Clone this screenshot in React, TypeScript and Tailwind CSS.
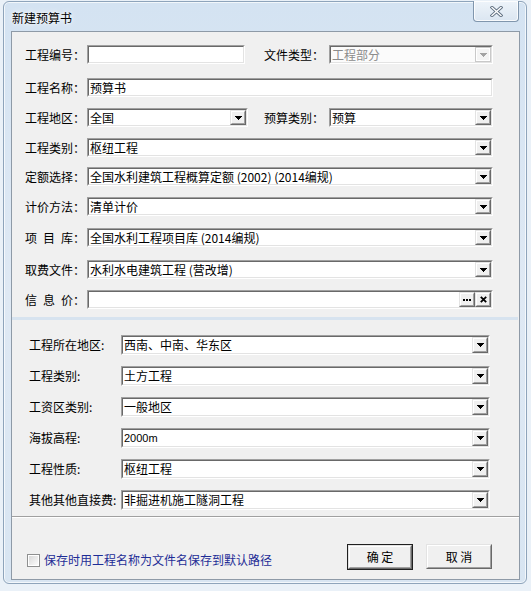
import type { ReactNode } from 'react';

const sunkenOuter =
  'border border-t-[#a0a0a0] border-l-[#a0a0a0] border-r-white border-b-white';
const sunkenInner =
  'border border-t-[#696969] border-l-[#696969] border-r-[#e3e3e3] border-b-[#e3e3e3]';
const raisedOuter =
  'border border-t-[#e3e3e3] border-l-[#e3e3e3] border-r-[#696969] border-b-[#696969]';
const raisedInner =
  'border border-t-white border-l-white border-r-[#a0a0a0] border-b-[#a0a0a0] bg-[#f0f0f0]';

function Tri({ color = '#000' }: { color?: string }) {
  return (
    <svg width="7" height="4" viewBox="0 0 7 4" shapeRendering="crispEdges">
      <rect x="0" y="0" width="7" height="1" fill={color} />
      <rect x="1" y="1" width="5" height="1" fill={color} />
      <rect x="2" y="2" width="3" height="1" fill={color} />
      <rect x="3" y="3" width="1" height="1" fill={color} />
    </svg>
  );
}

function SmallBtn({ children }: { children: ReactNode }) {
  return (
    <div className={`w-[16px] h-full flex ${raisedOuter}`}>
      <div className={`flex-1 flex items-center justify-center ${raisedInner}`}>{children}</div>
    </div>
  );
}

function DisabledBtn() {
  return (
    <div className="w-[16px] h-full flex border border-[#c9c9c9] bg-[#f4f4f4]">
      <div className="flex-1 flex items-center justify-center border border-white">
        <Tri color="#a3a3a3" />
      </div>
    </div>
  );
}

function Field({
  w,
  h = 'h-[19px]',
  text,
  drop,
  disabled,
  textClass = 'text-[12px]',
  extra,
}: {
  w: string;
  h?: string;
  text?: string;
  drop?: boolean;
  disabled?: boolean;
  textClass?: string;
  extra?: ReactNode;
}) {
  return (
    <div className={`flex ${w} ${h} ${sunkenOuter}`}>
      <div className={`flex-1 flex ${sunkenInner} ${disabled ? 'bg-[#fbfbfb]' : 'bg-white'}`}>
        <div
          className={`flex-1 flex items-center pl-[1px] leading-none whitespace-pre ${textClass} ${
            disabled ? 'text-[#8c8c8c]' : 'text-black'
          }`}
        >
          {text}
        </div>
        {drop && (disabled ? <DisabledBtn /> : <SmallBtn><Tri /></SmallBtn>)}
        {extra}
      </div>
    </div>
  );
}

function Label({ w, children }: { w: string; children: ReactNode }) {
  return <span className={`${w} shrink-0 text-[12px] leading-none whitespace-pre text-black`}>{children}</span>;
}

function TopRow({ mt, children }: { mt: string; children: ReactNode }) {
  return <div className={`flex items-center h-[19px] ${mt}`}>{children}</div>;
}

function LowRow({ mt, label, text, textClass }: { mt: string; label: string; text: string; textClass?: string }) {
  return (
    <div className={`flex items-center h-[20px] ${mt}`}>
      <Label w="w-[92px]">{label}</Label>
      <Field w="w-[369px]" h="h-[20px]" text={text} drop textClass={textClass} />
    </div>
  );
}

export default function App() {
  return (
    <div className="w-[531px] h-[591px] overflow-hidden bg-[#eaf1f8] font-['Noto_Sans_CJK_SC','Noto_Sans',sans-serif]">
      <div className="ml-[3px] mt-[1px] w-[524px] h-[583px] rounded-[6px] border border-[#8ea4bb] bg-gradient-to-b from-[#d4e3f2] via-[#dfe9f4] to-[#d8e5f2] shadow-[inset_0_0_0_1px_rgba(255,255,255,0.7)]">
        {/* title bar */}
        <div className="flex justify-between items-start h-[29px]">
          <span className="pl-[8px] pt-[9px] text-[12px] leading-[14px] text-black [text-shadow:0_0_6px_#ffffff,0_0_3px_#ffffff]">
            新建预算书
          </span>
          <div className="-mt-px mr-[7px] w-[46px] h-[21px] rounded-b-[4px] border border-t-0 border-[#8096ad] bg-gradient-to-b from-[#eef4fa] to-[#dbe6f1] shadow-[inset_0_0_0_1px_rgba(255,255,255,0.8)] flex items-center justify-center">
            <svg width="13" height="11" viewBox="0 0 13 11" className="mt-[1px]">
              <path d="M2 1.5L11 9.5M11 1.5L2 9.5" stroke="#5f6f80" strokeWidth="3.2" strokeLinecap="square" fill="none" />
              <path d="M2 1.5L11 9.5M11 1.5L2 9.5" stroke="#ffffff" strokeWidth="1.4" strokeLinecap="square" fill="none" />
            </svg>
          </div>
        </div>

        {/* client area */}
        <div className="ml-[7px] w-[509px] h-[549px] border border-[#8e9aa7] bg-[#f0f0f0] flex flex-col">
          <div className="pl-[13px]">
            <TopRow mt="mt-[13px]">
              <Label w="w-[62px]">工程编号：</Label>
              <Field w="w-[158px]" />
              <span className="ml-[19px]" />
              <Label w="w-[65px]">文件类型：</Label>
              <Field w="w-[164px]" text="工程部分" drop disabled />
            </TopRow>
            <TopRow mt="mt-[14px]">
              <Label w="w-[62px]">工程名称：</Label>
              <Field w="w-[406px]" text="预算书" />
            </TopRow>
            <TopRow mt="mt-[11px]">
              <Label w="w-[62px]">工程地区：</Label>
              <Field w="w-[161px]" text="全国" drop />
              <span className="ml-[16px]" />
              <Label w="w-[65px]">预算类别：</Label>
              <Field w="w-[164px]" text="预算" drop />
            </TopRow>
            <TopRow mt="mt-[11px]">
              <Label w="w-[62px]">工程类别：</Label>
              <Field w="w-[406px]" text="枢纽工程" drop />
            </TopRow>
            <TopRow mt="mt-[10px]">
              <Label w="w-[62px]">定额选择：</Label>
              <Field w="w-[406px]" text="全国水利建筑工程概算定额 (2002) (2014编规)" drop />
            </TopRow>
            <TopRow mt="mt-[11px]">
              <Label w="w-[62px]">计价方法：</Label>
              <Field w="w-[406px]" text="清单计价" drop />
            </TopRow>
            <TopRow mt="mt-[12px]">
              <Label w="w-[62px]">{'项\u2002目\u2002库：'}</Label>
              <Field w="w-[406px]" text="全国水利工程项目库 (2014编规)" drop />
            </TopRow>
            <TopRow mt="mt-[13px]">
              <Label w="w-[62px]">取费文件：</Label>
              <Field w="w-[406px]" text="水利水电建筑工程 (营改增)" drop />
            </TopRow>
            <TopRow mt="mt-[11px]">
              <Label w="w-[62px]">{'信\u2002息\u2002价：'}</Label>
              <Field
                w="w-[406px]"
                extra={
                  <>
                    <SmallBtn>
                      <svg width="8" height="2" viewBox="0 0 8 2" shapeRendering="crispEdges">
                        <rect x="0" y="0" width="2" height="2" fill="#000" />
                        <rect x="3" y="0" width="2" height="2" fill="#000" />
                        <rect x="6" y="0" width="2" height="2" fill="#000" />
                      </svg>
                    </SmallBtn>
                    <SmallBtn>
                      <svg width="7" height="7" viewBox="0 0 7 7">
                        <path d="M0.8 0.8L6.2 6.2M6.2 0.8L0.8 6.2" stroke="#000" strokeWidth="1.8" fill="none" />
                      </svg>
                    </SmallBtn>
                  </>
                }
              />
            </TopRow>
          </div>

          <div className="mt-[8px] mr-[1px] h-[3px] bg-[#d7e3ef]" />

          <div className="pl-[17px]">
            <LowRow mt="mt-[15px]" label="工程所在地区:" text="西南、中南、华东区" />
            <LowRow mt="mt-[11px]" label="工程类别:" text="土方工程" />
            <LowRow mt="mt-[11px]" label="工资区类别:" text="一般地区" />
            <LowRow
              mt="mt-[11px]"
              label="海拔高程:"
              text="2000m"
              textClass="text-[11px] font-['Liberation_Sans',sans-serif]"
            />
            <LowRow mt="mt-[11px]" label="工程性质:" text="枢纽工程" />
            <LowRow mt="mt-[11px]" label="其他其他直接费:" text="非掘进机施工隧洞工程" />
          </div>

          <div className="mt-[6px] h-px bg-[#a0a0a0]" />
          <div className="h-px bg-white" />

          <div className="mt-[26px] h-[26px] flex items-center justify-between pl-[15px] pr-[27px]">
            <div className="flex items-center mt-[6px]">
              <div className="w-[13px] h-[13px] border border-[#8e8f8f] bg-white p-[1px]">
                <div className="w-full h-full bg-gradient-to-br from-[#d9d9d9] to-[#fbfbfb]" />
              </div>
              <span className="ml-[4px] text-[12px] leading-none text-[#1e2d96]">
                保存时用工程名称为文件名保存到默认路径
              </span>
            </div>
            <div className="flex items-start gap-[13px] h-[26px]">
              <div className="w-[66px] h-[26px] flex border border-[#202020]">
                <div className={`flex-1 flex ${raisedOuter}`}>
                  <div className={`flex-1 flex items-center justify-center text-[12px] leading-none text-black ${raisedInner}`}>
                    确 定
                  </div>
                </div>
              </div>
              <div className={`w-[66px] h-[25px] flex ${raisedOuter}`}>
                <div className={`flex-1 flex items-center justify-center text-[12px] leading-none text-black ${raisedInner}`}>
                  取 消
                </div>
              </div>
            </div>
          </div>
        </div>
      </div>
    </div>
  );
}
